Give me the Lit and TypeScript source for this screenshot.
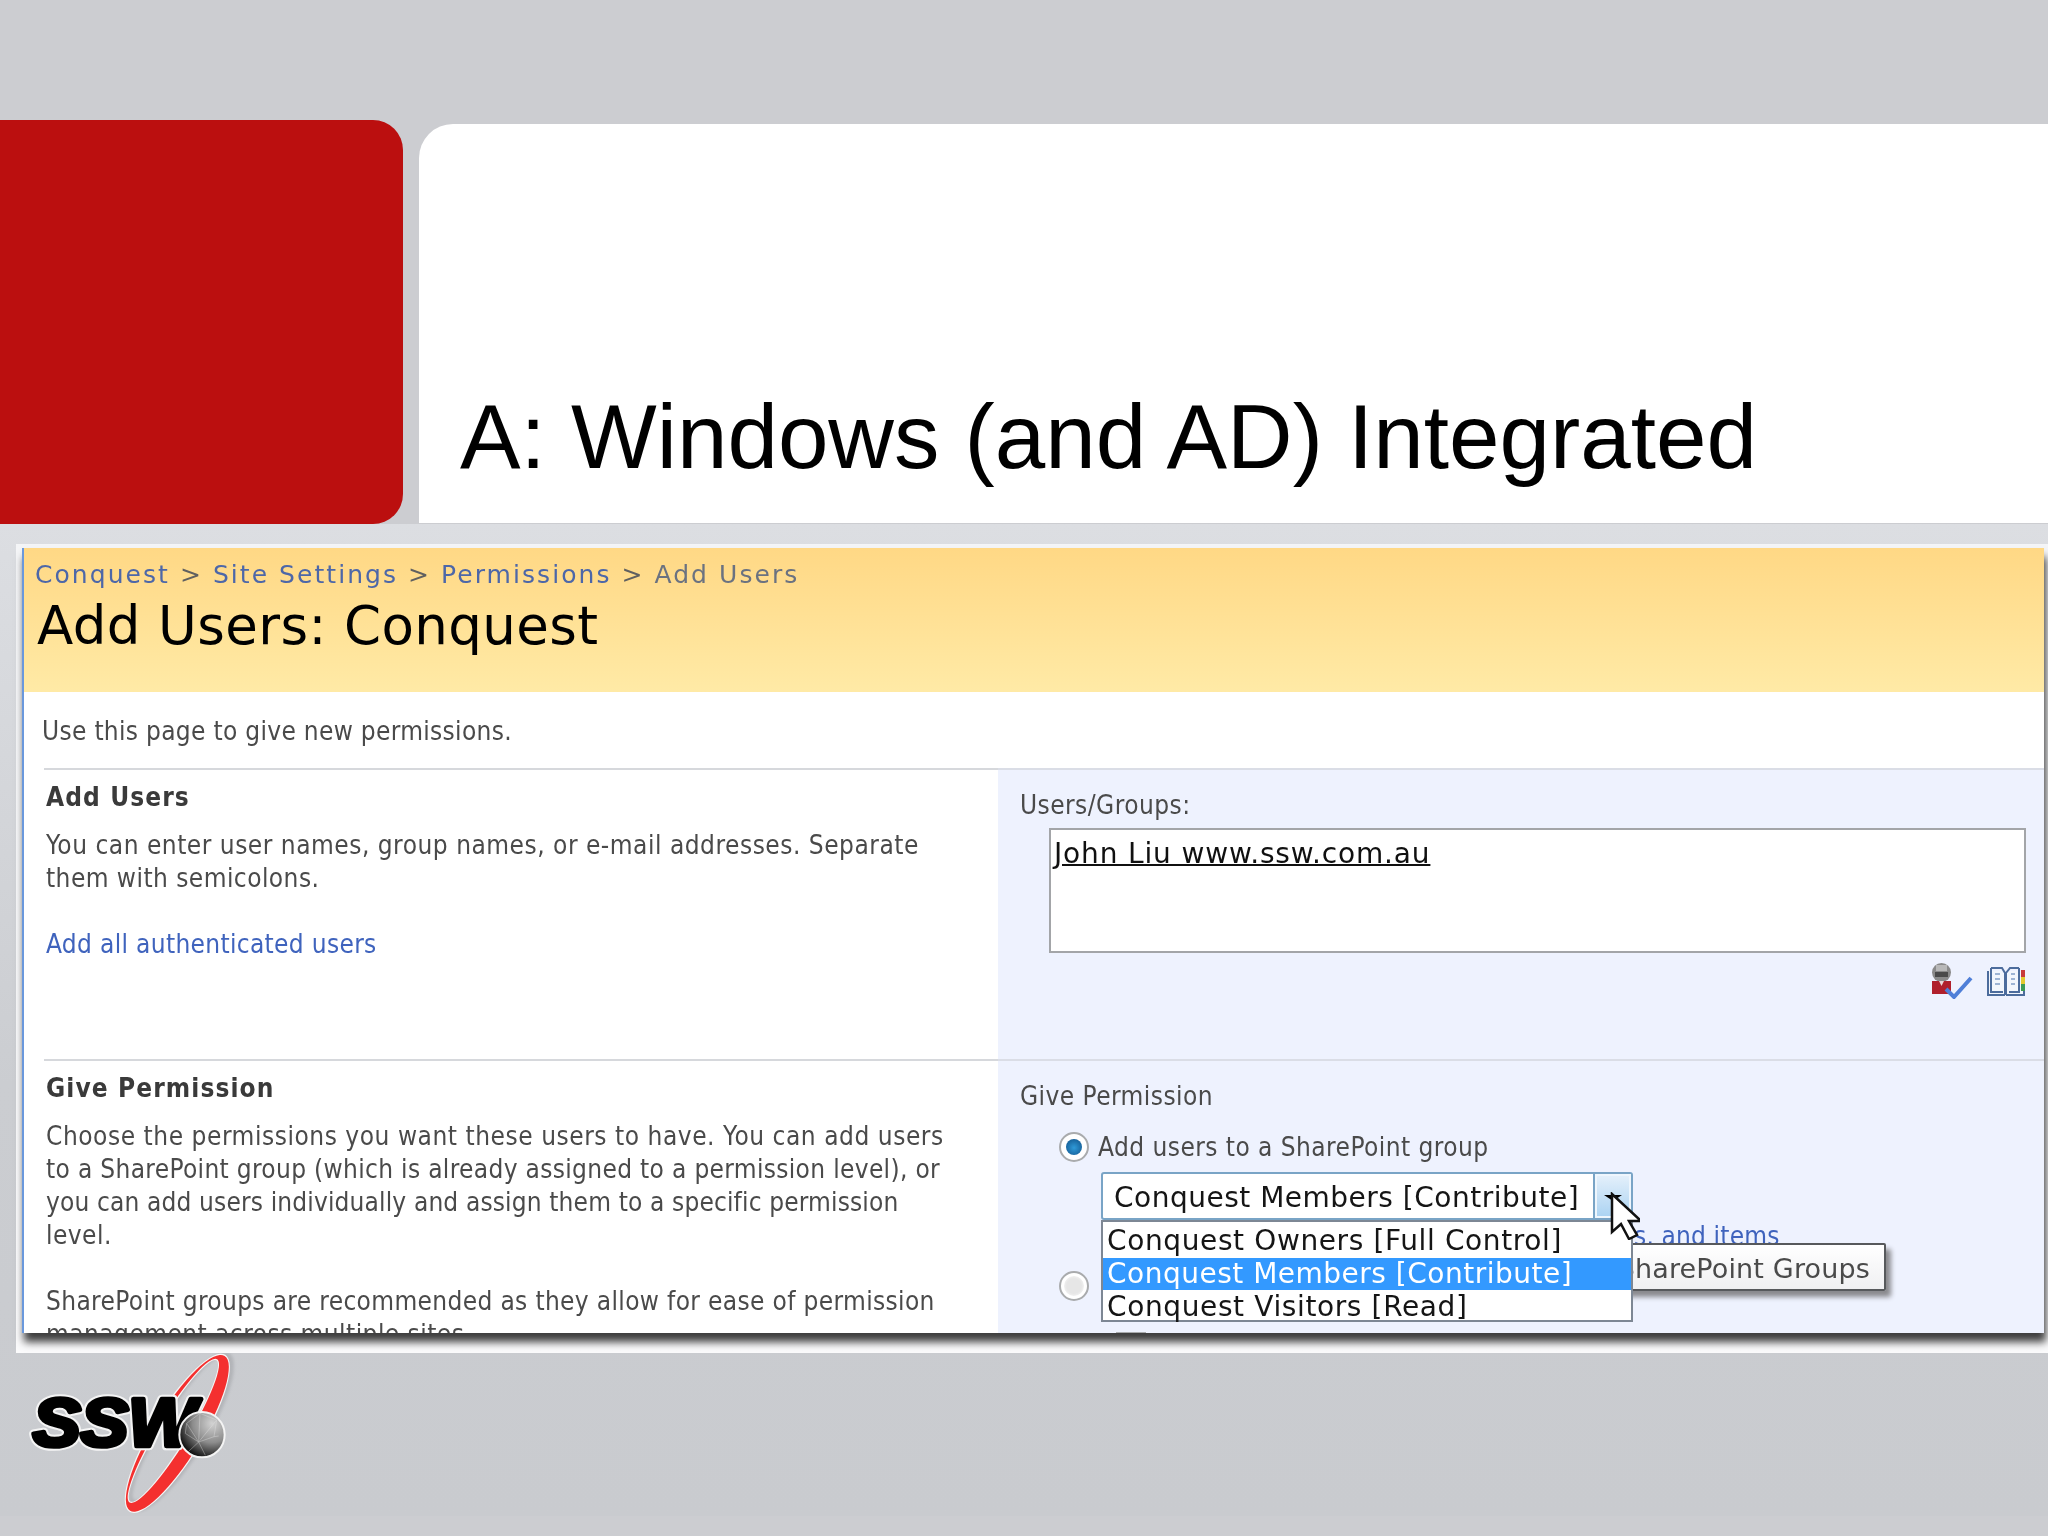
import { LitElement, html, css, svg } from "lit";
import { customElement } from "lit/decorators.js";

const logo = svg`
<svg class="logo" viewBox="0 69 900 549" xmlns="http://www.w3.org/2000/svg">
  <defs>
    <radialGradient id="gl" cx="0.72" cy="0.25" r="0.95">
      <stop offset="0" stop-color="#d2d2d2"/><stop offset="0.45" stop-color="#8c8c8c"/><stop offset="0.85" stop-color="#0c0c0c"/><stop offset="1" stop-color="#000"/>
    </radialGradient>
    <filter id="sh" x="-10%" y="-10%" width="120%" height="120%"><feGaussianBlur stdDeviation="5"/></filter>
  </defs>
  <g transform="rotate(-58.6 532 310)">
    <path transform="translate(10 8)" fill-rule="evenodd" fill="#8f9195" opacity=".4" filter="url(#sh)" d="M256 310a276 76 0 1 0 552 0a276 76 0 1 0 -552 0Z M284 296a248 44 0 1 1 496 0a248 44 0 1 1 -496 0Z"/>
    <path fill-rule="evenodd" fill="#f5f5f5" d="M256 310a276 76 0 1 0 552 0a276 76 0 1 0 -552 0Z M284 296a248 42 0 1 1 496 0a248 42 0 1 1 -496 0Z"/>
    <path fill-rule="evenodd" fill="#f4302f" d="M260 310a272 72 0 1 0 544 0a272 72 0 1 0 -544 0Z M280 296a252 46 0 1 1 504 0a252 46 0 1 1 -504 0Z"/>
  </g>
  <text class="ssw ssw-o" x="98" y="348" textLength="490" lengthAdjust="spacingAndGlyphs">SSW</text>
  <text class="ssw ssw-i" x="98" y="348" textLength="490" lengthAdjust="spacingAndGlyphs">SSW</text>
  <circle cx="606" cy="314" r="68" fill="url(#gl)" stroke="#f4f4f4" stroke-width="6"/>
  <g fill="none" stroke="#e6e6e6" stroke-width="2" opacity=".55">
    <path d="M560 280l40 -30l50 20l-8 50l-46 16l-40 -26z M600 250l-4 86 M650 270l-54 66"/>
    <path d="M560 280l36 56l-30 28 M642 320l14 -2 M596 336l20 40"/>
  </g>
</svg>`;

const checkIcon = svg`
<svg class="ic-check" viewBox="0 0 42 36" xmlns="http://www.w3.org/2000/svg">
  <ellipse cx="10.500" cy="9.500" rx="9.500" ry="9.500" fill="#8a8a8a"/><path d="M5 2h11v6H5z" fill="#b8b8b8"/><path d="M4 9h13v5H4z" fill="#4a4a4a"/>
  <path d="M1 18h19v13H1z" fill="#b0202c"/><path d="M8 18h5l-2.500 5z" fill="#e9d9d9"/>
  <path d="M15 26l8 8L40 15" fill="none" stroke="#4f7fd8" stroke-width="4"/>
</svg>`;

const bookIcon = svg`
<svg class="ic-book" viewBox="0 0 38 32" xmlns="http://www.w3.org/2000/svg">
  <path d="M1 6h14l3 3v21H1z M37 6H22l-3 3v21h18z" fill="#f2f6fc"/>
  <path d="M1 6v24h17 M37 6v24H19 M4 3h11l3 5v22 M32 3H23l-4 5v22 M4 3v24h12 M32 3v24H22" fill="none" stroke="#4c6c9c" stroke-width="2"/>
  <path d="M8 9h5M8 14h5M8 19h5M24 9h4M24 14h4M24 19h4" stroke="#9db4d4" stroke-width="2"/>
  <path d="M34 5h4v7h-4z" fill="#c83a3a"/><path d="M34 12h4v7h-4z" fill="#e3c92f"/><path d="M34 19h4v7h-4z" fill="#3d9a55"/>
</svg>`;

const cursor = svg`
<svg class="cursor" viewBox="0 0 30 48" xmlns="http://www.w3.org/2000/svg">
  <path d="M2 2v38l9-8l8 15l8-4l-8-14h12z" fill="#fff" stroke="#111" stroke-width="2.500" stroke-linejoin="miter"/>
</svg>`;

@customElement("app-root")
export class AppRoot extends LitElement {
  static styles = css`
    :host { display: block; width: 2048px; height: 1536px; overflow: hidden; background: #cccdd1; font-family: "Liberation Sans", Arial, sans-serif; }
    .hero { display: flex; height: 404px; padding-top: 120px; }
    .red { width: 403px; background: #bb0f0f; border-radius: 0 30px 30px 0; flex: none; }
    .white { flex: 1; margin: 4px 0 1px 16px; background: #fff; border-radius: 34px 0 0 0; display: flex; align-items: flex-end; padding: 0 0 36px 41px; }
    h1.title { margin: 0; font-weight: 400; font-size: 90.8px; line-height: 100px; color: #000; white-space: nowrap; }
    .lower { height: 992px; background: linear-gradient(#dcdee2 0, #cbcdd1 560px, #c9cbcf 100%); padding-top: 20px; box-sizing: border-box; }
    .frame { margin-left: 16px; height: 809px; box-sizing: border-box; padding: 4px 0 0 6px; background: linear-gradient(#f4f5f7, #fbfbfc); }
    .panel { position: relative; width: 2022px; height: 785px; box-sizing: border-box; overflow: hidden; border-left: 2px solid #6a98dc; background: #fff; font-family: "DejaVu Sans Condensed", "DejaVu Sans", sans-serif; color: #4a4a4a; font-size: 26px; letter-spacing: .45px; line-height: 33px; white-space: nowrap; filter: blur(.5px); }
    .shadow { box-shadow: 2px 9px 8px 0 #3e3e3e; width: 2022px; height: 785px; }
    .head { height: 144px; background: linear-gradient(#ffd885, #ffeaa6); padding: 10px 0 0 11px; box-sizing: border-box; font-family: "DejaVu Sans", sans-serif; }
    .crumbs { font-size: 25px; line-height: 33px; letter-spacing: 2.05px; color: #4d67a8; }
    .crumbs .sep { color: #606060; } .crumbs .cur { color: #6b7280; }
    .h { font-size: 53px; line-height: 60px; letter-spacing: .4px; color: #000; margin: 5px 0 0 2px; }
    .intro { height: 76px; padding: 23px 0 0 18px; box-sizing: border-box; letter-spacing: .31px; }
    .row { display: grid; grid-template-columns: 974px 1fr; }
    .l { margin-left: 20px; border-top: 2px solid #d6d8dc; padding: 11px 0 0 2px; }
    .r { background: #eef2fe; border-top: 2px solid #dadde6; padding: 19px 0 0 22px; }
    .r.a { height: 291px; box-sizing: border-box; }
    .r.b { height: 300px; box-sizing: border-box; }
    .l.a { height: 291px; box-sizing: border-box; }
    .bold { font-weight: 700; letter-spacing: 1.1px; color: #3a3a3a; margin-bottom: 15px; }
    .link { color: #3f63bd; }
    .gap { height: 33px; }
    .t1 { letter-spacing: .51px; } .t2 { letter-spacing: .54px; } .t3 { letter-spacing: .33px; } .t4 { letter-spacing: .15px; } .t5 { letter-spacing: .35px; }
    .box { margin: 6px 0 0 29px; width: 977px; height: 125px; box-sizing: border-box; background: #fff; border: 2px solid #a3a5a8; padding: 7px 0 0 3px; font-family: "DejaVu Sans", sans-serif; font-size: 28px; letter-spacing: .85px; color: #101010; }
    .box span { text-decoration: underline; text-decoration-thickness: 2px; }
    .icons { display: flex; justify-content: flex-end; gap: 14px; margin: 10px 20px 0 0; width: 1005px; }
    .ic-check { width: 42px; height: 36px; display: block; } .ic-book { width: 38px; height: 32px; display: block; margin-top: 2px; }
    .radio-row { display: flex; align-items: center; gap: 9px; margin: 18px 0 0 39px; height: 32px; }
    .radio { width: 30px; height: 30px; border-radius: 50%; box-sizing: border-box; border: 2px solid #a9abad; background: radial-gradient(#fff 55%, #e8e8e8); display: flex; align-items: center; justify-content: center; flex: none; box-shadow: inset 0 0 0 3px #fff; }
    .radio i { display: block; width: 16px; height: 16px; border-radius: 50%; background: radial-gradient(circle at 50% 55%, #2f9ad8, #0f4f86); }
    .radio.off { background: radial-gradient(#e6e6e6 40%, #fff 75%); }
    .wrap { position: relative; margin: 9px 0 0 81px; width: 532px; }
    .select { height: 48px; box-sizing: border-box; display: flex; background: #fff; border: 2px solid #79a4c6; border-radius: 3px; }
    .select .v { flex: 1; padding: 7px 0 0 11px; font-family: "DejaVu Sans", sans-serif; font-size: 28px; color: #151515; letter-spacing: .5px; }
    .select .btn { width: 38px; border-left: 2px solid #79a4c6; background: linear-gradient(#e6f1fb, #a9d2f2); box-shadow: inset 0 0 0 2px #eef6fd; display: flex; justify-content: center; padding-top: 21px; box-sizing: border-box; }
    .tri { width: 0; height: 0; border: 9px solid transparent; border-top: 6px solid #000; border-bottom: 0; }
    .under { height: 33px; letter-spacing: .18px; }
    .list { position: absolute; left: 0; top: 48px; width: 532px; height: 102px; box-sizing: border-box; background: #fff; border: 2px solid #7d8794; z-index: 3; font-family: "DejaVu Sans", sans-serif; font-size: 28px; color: #151515; letter-spacing: .62px; padding-top: 3px; }
    .opt { height: 32px; line-height: 32px; padding-left: 4px; }
    .opt.sel { background: #3399ff; color: #fff; margin: 1px 0; letter-spacing: .5px; }
    .tip { position: absolute; left: 300px; top: 71px; width: 485px; height: 48px; box-sizing: border-box; background: linear-gradient(#fff, #f0f0f2); border: 2px solid #57595c; border-radius: 2px; box-shadow: 5px 6px 5px #8a8a8e; font-family: "DejaVu Sans", sans-serif; font-size: 27px; letter-spacing: .15px; color: #4a4a4a; text-align: right; padding: 7px 14px 0 0; z-index: 2; }
    .cursor { position: absolute; left: 509px; top: 20px; width: 30px; height: 48px; z-index: 4; }
    .r2 { margin-top: 17px; gap: 16px; }
    .cb { display: flex; gap: 14px; margin: 30px 0 0 96px; }
    .cb i { display: block; width: 30px; height: 30px; border: 2px solid #a9abad; background: #fff; box-sizing: border-box; }
    .logo { display: block; width: 300px; height: 183px; }
    .ssw { font-family: "Liberation Sans", sans-serif; font-weight: 700; font-style: italic; font-size: 205px; }
    .ssw-o { fill: #f4f4f4; stroke: #f4f4f4; stroke-width: 26; stroke-linejoin: round; }
    .ssw-i { fill: #000; stroke: #000; stroke-width: 14; stroke-linejoin: round; }
  `;

  render() {
    return html`
      <div class="hero">
        <div class="red"></div>
        <div class="white"><h1 class="title">A: Windows (and AD) Integrated</h1></div>
      </div>
      <div class="lower">
        <div class="frame">
          <div class="shadow">
          <div class="panel">
            <div class="head">
              <div class="crumbs">Conquest <span class="sep">&gt;</span> Site Settings <span class="sep">&gt;</span> Permissions <span class="sep">&gt;</span> <span class="cur">Add Users</span></div>
              <div class="h">Add Users: Conquest</div>
            </div>
            <div class="intro">Use this page to give new permissions.</div>
            <div class="row">
              <div class="l a">
                <div class="bold">Add Users</div>
                <div class="t1">You can enter user names, group names, or e-mail addresses. Separate</div>
                <div>them with semicolons.</div>
                <div class="gap"></div>
                <div class="link t3">Add all authenticated users</div>
              </div>
              <div class="r a">
                <div>Users/Groups:</div>
                <div class="box"><span>John Liu www.ssw.com.au</span></div>
                <div class="icons">${checkIcon}${bookIcon}</div>
              </div>
            </div>
            <div class="row">
              <div class="l">
                <div class="bold">Give Permission</div>
                <div class="t2">Choose the permissions you want these users to have. You can add users</div>
                <div class="t3">to a SharePoint group (which is already assigned to a permission level), or</div>
                <div class="t4">you can add users individually and assign them to a specific permission</div>
                <div>level.</div>
                <div class="gap"></div>
                <div class="t5">SharePoint groups are recommended as they allow for ease of permission</div>
                <div>management across multiple sites.</div>
              </div>
              <div class="r b">
                <div>Give Permission</div>
                <div class="radio-row"><span class="radio"><i></i></span><span>Add users to a SharePoint group</span></div>
                <div class="wrap">
                  <div class="select"><div class="v">Conquest Members [Contribute]</div><div class="btn"><div class="tri"></div></div></div>
                  <div class="list">
                    <div class="opt">Conquest Owners [Full Control]</div>
                    <div class="opt sel">Conquest Members [Contribute]</div>
                    <div class="opt">Conquest Visitors [Read]</div>
                  </div>
                  <div class="tip">SharePoint Groups</div>
                  ${cursor}
                  <div class="under link">View permissions this group has on sites, lists, and items</div>
                </div>
                <div class="radio-row r2"><span class="radio off"></span><span>Give users permission directly</span></div>
                <div class="cb"><i></i><span>Full Control - Has full control.</span></div>
              </div>
            </div>
          </div>
          </div>
        </div>
        ${logo}
      </div>
    `;
  }
}
